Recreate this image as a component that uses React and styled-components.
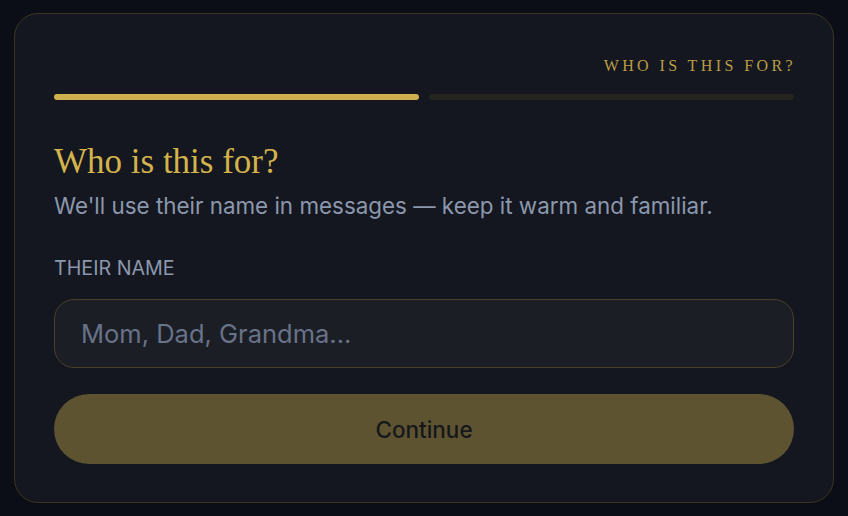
import styled, { createGlobalStyle } from 'styled-components';

const GlobalStyle = createGlobalStyle`
  html, body {
    margin: 0;
    padding: 0;
    background: #0b0e16;
  }
  body {
    font-family: Inter, "Noto Sans", sans-serif;
  }
`;

const Page = styled.div`
  width: 848px;
  height: 516px;
  padding: 13px 14px 0 14px;
  box-sizing: border-box;
`;

const Card = styled.div`
  box-sizing: border-box;
  width: 820px;
  height: 490px;
  background: #14171f;
  border: 1px solid #3a3424;
  border-radius: 24px;
  padding: 40px 39px 0 39px;
  display: flex;
  flex-direction: column;
`;

const StepLabel = styled.div`
  align-self: flex-end;
  font-family: "Liberation Serif", "DejaVu Serif", serif;
  font-size: 16px;
  letter-spacing: 3.4px;
  color: #b99d45;
  line-height: 24px;
  margin-right: -2px;
`;

const Progress = styled.div`
  display: flex;
  gap: 10px;
  margin-top: 16px;
`;

const Segment = styled.div`
  flex: 1;
  height: 6px;
  border-radius: 3px;
  background: ${p => (p.$active ? '#d0b04e' : '#25241f')};
`;

const Heading = styled.h1`
  margin: 40px 0 0 0;
  font-family: "Liberation Serif", "DejaVu Serif", serif;
  font-weight: 400;
  font-size: 35px;
  line-height: 44px;
  color: #d4b34c;
`;

const Subtitle = styled.p`
  margin: 7px 0 0 0;
  font-size: 22.4px;
  line-height: 30px;
  color: #8c97ad;
`;

const FieldLabel = styled.label`
  margin-top: 35px;
  font-size: 19.7px;
  line-height: 24px;
  color: #8c97ad;
`;

const Input = styled.input`
  margin-top: 19px;
  box-sizing: border-box;
  height: 69px;
  width: 100%;
  background: #1c1e26;
  border: 1px solid #4a4029;
  border-radius: 20px;
  padding: 0 26px;
  font-family: Inter, "Noto Sans", sans-serif;
  font-size: 25.5px;
  color: #d6d9e0;
  outline: none;
  &::placeholder {
    color: #687288;
  }
`;

const Button = styled.button`
  margin-top: 26px;
  height: 70px;
  width: 100%;
  border: none;
  border-radius: 36px;
  background: #5d5331;
  color: #16171b;
  font-family: Inter, "Noto Sans", sans-serif;
  font-size: 22.5px;
  font-weight: 500;
  cursor: pointer;
`;

export default function App() {
  return (
    <>
      <GlobalStyle />
      <Page>
        <Card>
          <StepLabel>WHO IS THIS FOR?</StepLabel>
          <Progress>
            <Segment $active />
            <Segment />
          </Progress>
          <Heading>Who is this for?</Heading>
          <Subtitle>We'll use their name in messages — keep it warm and familiar.</Subtitle>
          <FieldLabel htmlFor="name">THEIR NAME</FieldLabel>
          <Input id="name" placeholder="Mom, Dad, Grandma..." />
          <Button>Continue</Button>
        </Card>
      </Page>
    </>
  );
}
